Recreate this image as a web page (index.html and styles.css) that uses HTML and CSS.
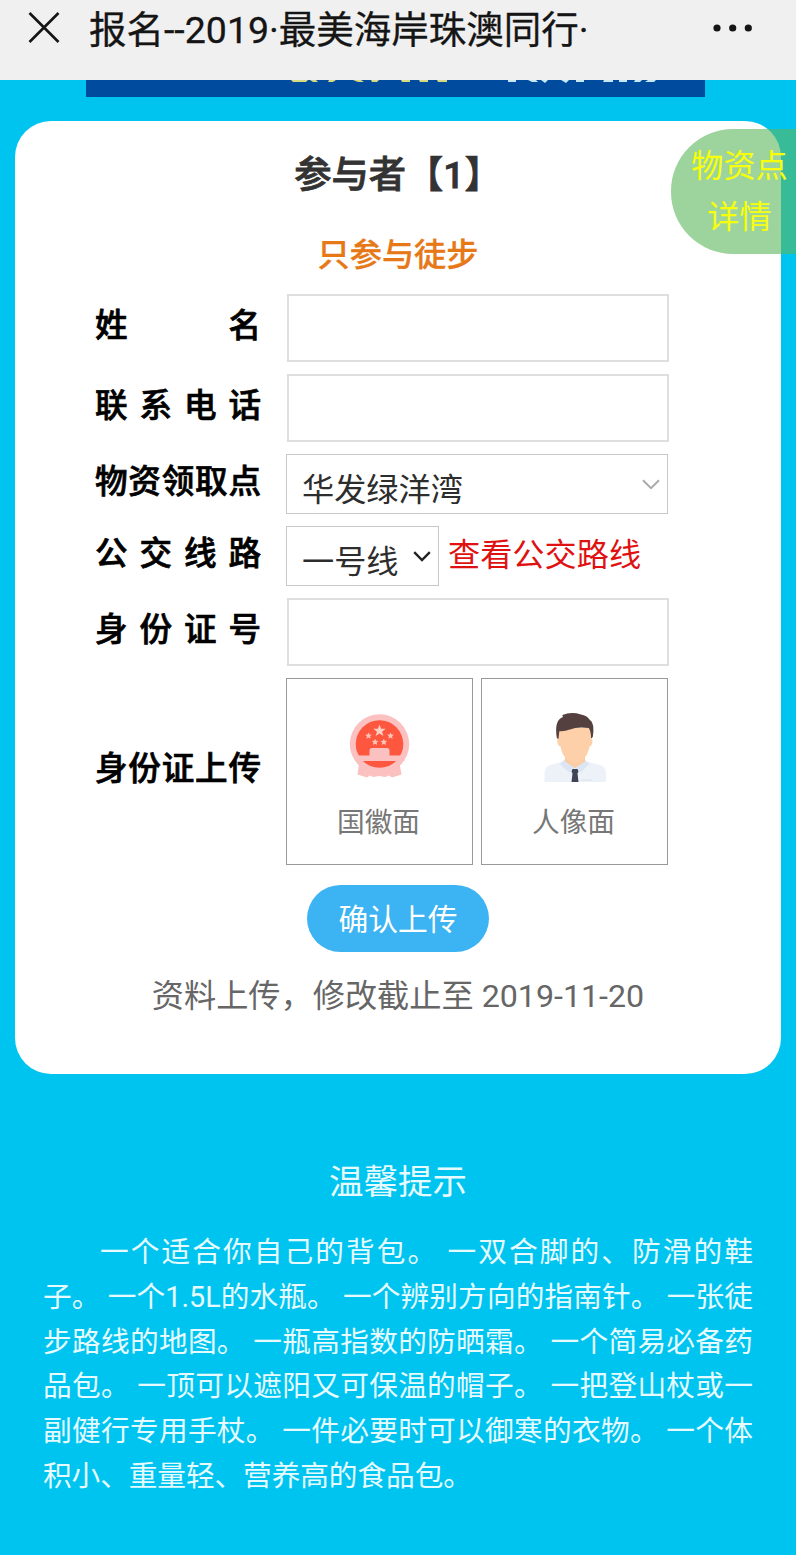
FILE: index.html
```html
<!DOCTYPE html>
<html lang="zh-CN">
<head>
<meta charset="utf-8">
<title>报名--2019·最美海岸珠澳同行·</title>
<link rel="stylesheet" href="styles.css">
</head>
<body>
<header class="topbar">
  <svg class="close" width="32" height="32" viewBox="0 0 32 32"><path d="M1.500 1 30.500 30M30.500 1 1.500 30"/></svg>
  <h1 class="topbar-title">报名--2019·最美海岸珠澳同行·</h1>
  <svg class="more" width="40" height="8" viewBox="0 0 40 8"><circle cx="4" cy="4" r="3.6"/><circle cx="19.7" cy="4" r="3.6"/><circle cx="35.3" cy="4" r="3.6"/></svg>
</header>
<div class="banner">
  <svg width="619" height="4" viewBox="0 0 619 4">
    <path class="gold" d="M205 0h17l-2 2h-13zM224 0h6l2 2h-5zM243 0h7l-3 2h-5zM267 0h8l3 2h-6zM285 0h8l-2 2h-5zM315 0h9v2h-8zM333 0h9v2h-8zM351 0h10v2h-9z"/>
    <path class="pale" d="M422 0h8v2h-8zM442 0h8l2 2h-6zM455 0h7l-3 3zM475 0h8l-3 3zM490 0h8v2h-8zM518 0h9v2h-10zM533 0h8v2h-8zM549 0h7l-2 2h-6zM562 0h8l-2 2h-9z"/>
  </svg>
</div>
<main class="card">
  <h2 class="participant">参与者【1】</h2>
  <p class="mode">只参与徒步</p>
  <form class="form">
    <div class="row row-input"><label class="label">姓名</label><input class="text" type="text"></div>
    <div class="row row-input"><label class="label">联系电话</label><input class="text" type="text"></div>
    <div class="row row-select"><label class="label">物资领取点</label>
      <div class="select wide"><span>华发绿洋湾</span><svg class="chev light" width="18" height="11" viewBox="0 0 18 11"><path d="M1 1.2 9 9.2 17 1.2"/></svg></div>
    </div>
    <div class="row row-select"><label class="label">公交线路</label>
      <div class="select narrow"><span>一号线</span><svg class="chev" width="18" height="11" viewBox="0 0 18 11"><path d="M1.2 1.2 9 9 16.8 1.2"/></svg></div>
      <a class="route">查看公交路线</a>
    </div>
    <div class="row row-input"><label class="label">身份证号</label><input class="text" type="text"></div>
    <div class="row row-upload"><label class="label">身份证上传</label>
      <div class="uploads">
        <div class="upload">
          <svg width="64" height="72" viewBox="0 0 64 72">
            <path fill="#fbc1c1" d="M11 52 9.500 63.500 19 66.500 22 64.500 25 66 31 65 37 66 41 64.500 44 66.500 53.500 63.500 51.500 52Z"/>
            <circle cx="31.500" cy="33" r="29.700" fill="#fbc1c1"/>
            <circle cx="31.500" cy="33" r="23.800" fill="#fd5740"/>
            <path fill="#fbc1c1" d="M7 44.500h14.500v-5q0-2.500 2.500-2.500h15q2.500 0 2.500 2.500v5h15v5.600H7z"/>
            <path fill="#fcd0c4" d="m31.500 13.500 1.600 4.300h4.600l-3.700 2.900 1.400 4.400-3.900-2.600-3.900 2.600 1.400-4.400-3.700-2.900h4.600z"/>
            <g fill="#fcc4b8"><path id="star" d="m20.500 21.500 1 2 2.300.3-1.700 1.500.5 2.400-2.100-1.200-2.100 1.200.5-2.400-1.700-1.500 2.300-.3z"/><use href="#star" x="22"/><use href="#star" x="6.600" y="6.200"/><use href="#star" x="15.300" y="6.200"/></g>
          </svg>
          <span>国徽面</span>
        </div>
        <div class="upload">
          <svg width="64" height="72" viewBox="0 0 64 72">
            <path fill="#edf1f8" d="M1.500 71V62q0-6 6-8L22 50h20l15 4q6 2 6 8v9z"/>
            <path fill="#dce5f3" d="m21 49-4 4 9 8.500 6-4.500 6 4.500 8-8.500-4-4z"/>
            <path fill="#fdcba2" d="M22 43h20v7.500q-5 3-10 6.500-5-3.500-10-6.500z"/>
            <path fill="#fed0a9" d="M15 17h33v11q2.500 0 1 5-1 2.500-2.500 2.500-1.500 8-5.500 12-5 5-9 5.500-4-.5-9-5.500-4-4-5.500-12-2 0-3-3.500-1-4 .5-4z"/>
            <path fill="#53403f" d="M13.800 27Q11 9 20 6q-1-1.500-.5-2Q28 .5 38 3.500q6 1 8.500 5Q52 12 49.800 26l-1.700 1.500q0-7-2.300-10.500Q34 15.500 27 18.500q-7 2.500-10.500 1.500Q16 22 15.500 28z"/>
            <path fill="#3e4356" d="M29.500 58h5l1 2.500-1 2L35.500 71h-7l1-8.500-1-2z"/>
            <path fill="#d8deea" d="M38 68.500h10.500v1H38z"/>
          </svg>
          <span>人像面</span>
        </div>
      </div>
    </div>
  </form>
  <button class="submit" type="button">确认上传</button>
  <p class="deadline">资料上传，修改截止至 2019-11-20</p>
</main>
<section class="tips">
  <h3 class="tips-title">温馨提示</h3>
  <div class="tips-body">
    <p class="first">一个适合你自己的背包。 一双合脚的、防滑的鞋</p>
    <p>子。 一个1.5L的水瓶。 一个辨别方向的指南针。 一张徒</p>
    <p>步路线的地图。 一瓶高指数的防晒霜。 一个简易必备药</p>
    <p>品包。 一顶可以遮阳又可保温的帽子。 一把登山杖或一</p>
    <p>副健行专用手杖。 一件必要时可以御寒的衣物。 一个体</p>
    <p class="last">积小、重量轻、营养高的食品包。</p>
  </div>
</section>
<aside class="badge">物资点<br>详情</aside>
</body>
</html>
```
FILE: styles.css
```css
* { box-sizing: border-box; margin: 0; padding: 0; }
body {
  position: relative;
  width: 796px;
  height: 1555px;
  overflow: hidden;
  background: #00c4f0;
  font-family: Roboto, "Noto Sans CJK SC", sans-serif;
  font-size: 32.2px;
}
.topbar {
  display: flex;
  align-items: center;
  height: 80px;
  padding: 0 43px 24px 28px;
  background: #f0f0f0;
}
.close { fill: none; stroke: #151515; stroke-width: 2.6; }
.topbar-title {
  flex: 1;
  margin: 4px 0 0 29px;
  font-size: 37.5px;
  font-weight: 400;
  line-height: 56px;
  color: #151515;
  white-space: nowrap;
  -webkit-text-stroke: .3px #151515;
}
.more { fill: #151515; }
.banner {
  width: 619px;
  height: 17px;
  margin-left: 86px;
  background: #004b9d;
}
.banner svg { display: block; }
.gold { fill: #d8da82; }
.pale { fill: #c5e8f5; }
.card {
  display: flex;
  flex-direction: column;
  align-items: center;
  width: 766px;
  height: 953px;
  margin: 24px 0 0 15px;
  padding-top: 26px;
  border-radius: 36px;
  background: #fff;
}
.participant { font-size: 37.3px; line-height: 56px; font-weight: 500; color: #333; -webkit-text-stroke: .8px #333; }
.mode { margin-top: 28px; line-height: 48px; font-weight: 500; color: #e67817; -webkit-text-stroke: .3px #e67817; }
.form {
  display: flex;
  flex-direction: column;
  align-self: stretch;
  gap: 12px;
  margin-top: 15px;
  padding-left: 80px;
}
.row { display: flex; align-items: center; }
.row-input { height: 68px; }
.row-select { height: 60px; }
.row-upload { height: 187px; }
.label {
  width: 166px;
  margin: 0 25px 5px 0;
  font-size: 32.6px;
  line-height: 48px;
  font-weight: 500;
  color: #000;
  -webkit-text-stroke: .7px #000;
  text-align: justify;
  text-align-last: justify;
  text-justify: inter-character;
  white-space: nowrap;
}
.text {
  width: 382px;
  height: 68px;
  margin-left: 1px;
  border: 2px solid #dfdfdf;
  background: #fff;
  outline: 0;
}
.select {
  display: flex;
  align-items: center;
  justify-content: space-between;
  height: 60px;
  padding: 12px 7px 0 15px;
  border: 1px solid #c8c8c8;
  line-height: 48px;
  color: #2d2d2d;
}
.wide { width: 382px; }
.narrow { width: 153px; }
.chev { margin-bottom: 11px; fill: none; stroke: #222; stroke-width: 2.4; }
.light { stroke: #aaa; stroke-width: 2; }
.route { margin: 0 0 3px 9px; line-height: 48px; color: #e01111; }
.uploads { display: flex; gap: 8px; }
.upload {
  display: flex;
  flex-direction: column;
  align-items: center;
  width: 187px;
  height: 187px;
  padding-top: 32px;
  border: 1px solid #999;
  font-size: 27.7px;
  line-height: 40px;
  color: #777;
}
.upload span { margin: 20px 2px 0 0; }
.submit {
  width: 182px;
  height: 67px;
  margin-top: 20px;
  padding-bottom: 4px;
  border: 0;
  border-radius: 34px;
  background: #3cb3f2;
  color: #fff;
  font: inherit;
  font-size: 29.8px;
}
.deadline { margin-top: 20px; line-height: 48px; color: #666; white-space: nowrap; }
.tips { padding: 81px 43px 0; color: #e6fbff; }
.tips-title { font-size: 34.5px; font-weight: 400; line-height: 54px; text-align: center; }
.tips-body { margin-top: 21px; font-size: 28.7px; line-height: 44.8px; }
.tips-body p { width: 710px; white-space: nowrap; text-align: justify; text-align-last: justify; text-justify: inter-character; }
.tips-body .first { padding-left: 57px; }
.tips-body .last { text-align-last: left; letter-spacing: -.1px; }
.badge {
  position: absolute;
  top: 129px;
  right: 0;
  width: 125px;
  height: 125px;
  padding: 12px 0 0 12px;
  border-radius: 62px 0 0 62px;
  background: rgba(92, 184, 92, .6);
  line-height: 51px;
  text-align: center;
  color: #f7ff0a;
}
```
